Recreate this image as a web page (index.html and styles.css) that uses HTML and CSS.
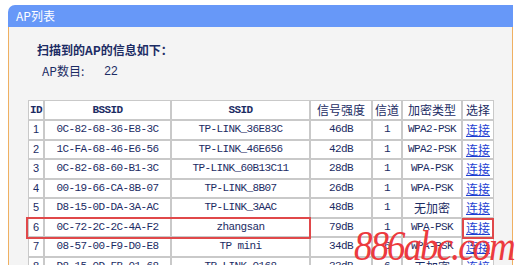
FILE: index.html
```html
<!DOCTYPE html>
<html lang="zh-CN">
<head>
    <meta charset="UTF-8">
    <title>AP列表</title>
    <link rel="stylesheet" href="styles.css">
</head>
<body>
    <div class="panel">
        <div class="panel-title">AP列表</div>
        <div class="panel-body">
            <p class="intro">扫描到的AP的信息如下：</p>
            <p class="count"><span>AP数目:</span><span class="num">22</span></p>
            <div class="table-wrap">
                <table class="ap-table">
                    <colgroup>
                        <col class="c-id"><col class="c-bssid"><col class="c-ssid"><col class="c-sig">
                        <col class="c-ch"><col class="c-enc"><col class="c-sel">
                    </colgroup>
                    <tr class="head">
                        <th class="mono">ID</th><th class="mono">BSSID</th><th class="mono">SSID</th>
                        <th>信号强度</th><th>信道</th><th>加密类型</th><th>选择</th>
                    </tr>
                    <tr><td class="id">1</td><td>0C-82-68-36-E8-3C</td><td>TP-LINK_36E83C</td><td>46dB</td><td>1</td><td>WPA2-PSK</td><td class="cn"><a href="#">连接</a></td></tr>
                    <tr><td class="id">2</td><td>1C-FA-68-46-E6-56</td><td>TP-LINK_46E656</td><td>42dB</td><td>1</td><td>WPA2-PSK</td><td class="cn"><a href="#">连接</a></td></tr>
                    <tr><td class="id">3</td><td>0C-82-68-60-B1-3C</td><td>TP-LINK_60B13C11</td><td>28dB</td><td>1</td><td>WPA-PSK</td><td class="cn"><a href="#">连接</a></td></tr>
                    <tr><td class="id">4</td><td>00-19-66-CA-8B-07</td><td>TP-LINK_8B07</td><td>26dB</td><td>1</td><td>WPA-PSK</td><td class="cn"><a href="#">连接</a></td></tr>
                    <tr><td class="id">5</td><td>D8-15-0D-DA-3A-AC</td><td>TP-LINK_3AAC</td><td>48dB</td><td>1</td><td class="cn">无加密</td><td class="cn"><a href="#">连接</a></td></tr>
                    <tr><td class="id">6</td><td>0C-72-2C-2C-4A-F2</td><td>zhangsan</td><td>79dB</td><td>1</td><td>WPA-PSK</td><td class="cn"><a href="#">连接</a></td></tr>
                    <tr><td class="id">7</td><td>08-57-00-F9-D0-E8</td><td>TP mini</td><td>34dB</td><td>6</td><td>WPA-PSK</td><td class="cn"><a href="#">连接</a></td></tr>
                    <tr><td class="id">8</td><td>D8-15-0D-FB-01-68</td><td>TP-LINK_0168</td><td>33dB</td><td>6</td><td class="cn">无加密</td><td class="cn"><a href="#">连接</a></td></tr>
                </table>
                <div class="mark mark-row"></div>
                <div class="mark mark-link"></div>
            </div>
        </div>
    </div>
    <div class="watermark">886abc.com</div>
</body>
</html>
```

FILE: styles.css
```css
body {
    margin: 0;
    height: 265px;
    overflow: hidden;
    background: #fff;
    position: relative;
    font-family: "Noto Sans CJK SC", "Liberation Sans", sans-serif;
    color: #1c2c64;
}
.panel {
    margin: 5px 12px 0 8px;
}
.panel-title {
    height: 22px;
    line-height: 22px;
    padding-left: 8px;
    background: #6798f8;
    color: #fff;
    font-size: 12px;
    border-radius: 7px 0 0 0;
}
.panel-body {
    height: 238px;
    overflow: hidden;
    background: #f4f4f4;
    border-left: 1px solid #efb062;
    border-right: 1px solid #efb062;
    padding: 15px 0 0 19px;
}
.intro {
    margin: 0 0 0 9px;
    font-size: 12px;
    font-weight: bold;
    line-height: 16px;
}
.count {
    margin: 5px 0 0 14px;
    font-size: 12px;
    line-height: 16px;
    display: flex;
}
.count .num {
    margin-left: 20px;
    font-family: "Liberation Sans", sans-serif;
}
.table-wrap {
    position: relative;
    margin-top: 21px;
    width: 466px;
}
.ap-table {
    width: 466px;
    table-layout: fixed;
    border-collapse: separate;
    border-spacing: 0;
    background: #fff;
}
.c-id { width: 16px; }
.c-bssid { width: 127px; }
.c-ssid { width: 139px; }
.c-sig { width: 62px; }
.c-ch { width: 30px; }
.c-enc { width: 60px; }
.c-sel { width: 32px; }
.ap-table th,
.ap-table td {
    border: 1px solid #c9c9c9;
    padding: 0;
    text-align: center;
    white-space: nowrap;
    overflow: hidden;
    font-family: "Liberation Mono", monospace;
    font-size: 11px;
    letter-spacing: -0.6px;
    height: 17.5px;
    line-height: 17px;
}
.ap-table .head th {
    height: 18px;
    line-height: 18px;
    font-family: "Noto Sans CJK SC", sans-serif;
    font-weight: normal;
    font-size: 12px;
    letter-spacing: 0;
}
.ap-table .head th.mono {
    font-family: "Liberation Mono", monospace;
    font-weight: bold;
    font-size: 11px;
    letter-spacing: -0.6px;
}
.ap-table td.id {
    font-family: "Liberation Sans", sans-serif;
    font-size: 11px;
    letter-spacing: 0;
}
.ap-table td.cn {
    font-family: "Noto Sans CJK SC", sans-serif;
    font-size: 12px;
    letter-spacing: 0;
}
.ap-table a {
    color: #1e3ed2;
    text-decoration: underline;
}
.mark {
    position: absolute;
    border: 2px solid #e0484a;
    box-sizing: border-box;
}
.mark-row {
    left: -2px;
    top: 117px;
    width: 285px;
    height: 22px;
}
.mark-link {
    left: 434px;
    top: 118px;
    width: 32px;
    height: 21px;
}
.watermark {
    position: absolute;
    left: 354px;
    top: 222px;
    font-family: "Liberation Serif", serif;
    font-style: italic;
    font-size: 37px;
    letter-spacing: -2px;
    color: #ec3a3e;
    line-height: 42px;
    transform: scaleY(1.15);
    transform-origin: left top;
}
```
